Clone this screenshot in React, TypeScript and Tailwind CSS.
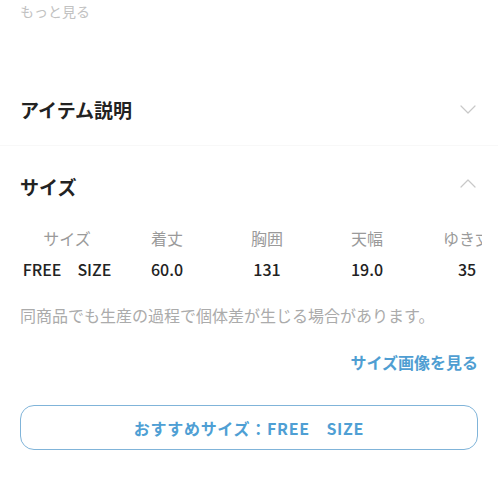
const sizeCols = [
  { label: "サイズ", value: "FREE\u3000SIZE" },
  { label: "着丈", value: "60.0" },
  { label: "胸囲", value: "131" },
  { label: "天幅", value: "19.0" },
  { label: "ゆき丈", value: "35" },
  { label: "裾幅", value: "60" },
];

const Chevron = ({ up }: { up?: boolean }) => (
  <svg width="16" height="10" viewBox="0 0 16 10" fill="none" className="text-[#c8c8c8]">
    <path
      d={up ? "M1 9 L8 2 L15 9" : "M1 1 L8 8 L15 1"}
      stroke="currentColor"
      strokeWidth="1.2"
      strokeLinecap="round"
      strokeLinejoin="round"
    />
  </svg>
);

export default function App() {
  return (
    <div
      className="w-[498px] h-[498px] bg-white overflow-hidden"
      style={{ fontFamily: '"Noto Sans CJK JP", "Noto Sans", sans-serif' }}
    >
      {/* もっと見る */}
      <div className="px-5 h-[22px] flex items-center text-[14px] text-[#c2c2c2]">もっと見る</div>

      {/* アイテム説明 */}
      <div className="mt-[53px] h-[70px] px-5 flex items-center justify-between">
        <h2 className="text-[19px] font-bold text-[#222]">アイテム説明</h2>
        <div className="pr-[2px]">
          <Chevron />
        </div>
      </div>
      <div className="h-px bg-[#f8f8f8]"></div>

      {/* サイズ */}
      <div className="h-[77px] pt-[6px] px-5 flex items-center justify-between">
        <h2 className="text-[19px] font-bold text-[#222]">サイズ</h2>
        <div className="pr-[2px] pb-[10px]">
          <Chevron up />
        </div>
      </div>

      {/* size table, scrolls sideways */}
      <div className="ml-[17px] w-[465px] overflow-hidden">
        <div className="flex w-max">
          {sizeCols.map((c) => (
            <div key={c.label} className="w-[100px] flex flex-col items-center">
              <div className="h-[30px] flex items-center text-[16px] text-[#9a9a9a] whitespace-nowrap">
                {c.label}
              </div>
              <div className="h-[31px] flex items-center text-[16px] font-medium text-[#222] whitespace-nowrap">
                {c.value}
              </div>
            </div>
          ))}
        </div>
      </div>

      <p className="mt-[21px] px-5 h-[20px] leading-[20px] text-[16px] text-[#ababab] whitespace-nowrap">
        同商品でも生産の過程で個体差が生じる場合があります。
      </p>

      <div className="mt-[27px] px-5 flex justify-end">
        <span className="text-[16px] font-bold text-[#4f9ed2] leading-[20px]">サイズ画像を見る</span>
      </div>

      <div className="mt-[33px] px-5">
        <button className="w-full h-[45px] rounded-[14px] border-[1.5px] border-[#80b4d9] flex items-center justify-center text-[16px] font-bold tracking-[0.7px] text-[#4f9fd4]">
          おすすめサイズ：FREE　SIZE
        </button>
      </div>
    </div>
  );
}
